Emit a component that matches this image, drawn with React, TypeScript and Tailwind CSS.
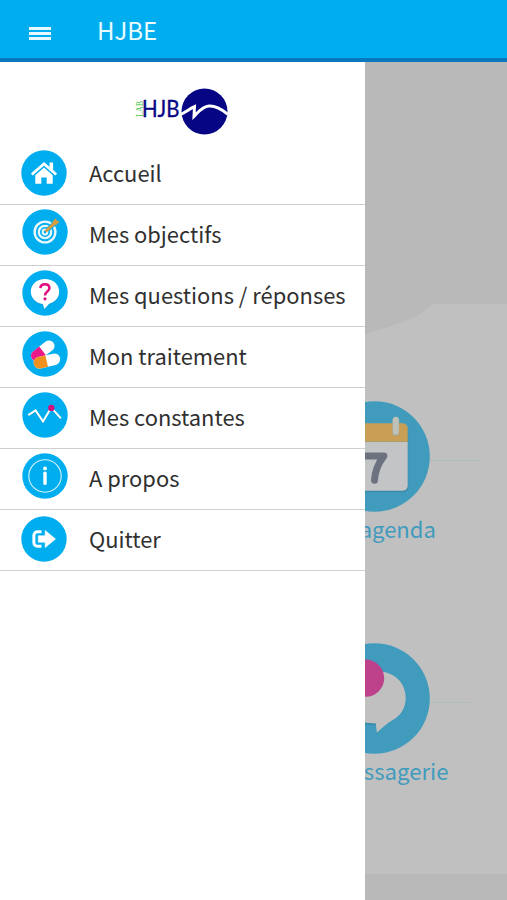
import type { ReactNode } from 'react';

const HomeIcon = () => (
  <svg viewBox="0 0 46 46" className="w-[46px] h-[46px]">
    <circle cx="23" cy="23" r="22.7" fill="#00aeef" />
    <path d="M28.5 12.5h3.6v8h-3.6z" fill="#fff" />
    <path d="M10.8 24.5 23 13.800l12.200 10.700" fill="none" stroke="#fff" strokeWidth="2.8" />
    <path d="M14.3 25.2 23 17.6l8.700 7.600v8.600h-6v-6.300h-5.400v6.300h-6z" fill="#fff" />
  </svg>
);

const TargetIcon = () => (
  <svg viewBox="0 0 46 46" className="w-[46px] h-[46px]">
    <circle cx="23" cy="23" r="22.7" fill="#00aeef" />
    <g fill="none" stroke="#e9f8fd">
      <circle cx="23" cy="23" r="10.4" strokeWidth="2.4" />
      <circle cx="23" cy="23" r="6.2" strokeWidth="2.3" />
      <circle cx="23" cy="23" r="2.4" strokeWidth="2" />
    </g>
    <path d="m26 20.400 6-5.600" stroke="#00aeef" strokeWidth="4.500" />
    <path d="m23.600 22.400 8-7.400" stroke="#d99b3c" strokeWidth="2.800" />
    <path d="m30 16.500.6-4 3.400-3.400.7 2.700 3 .6-3.500 3.500z" fill="#d99b3c" />
  </svg>
);

const QuestionIcon = () => (
  <svg viewBox="0 0 46 46" className="w-[46px] h-[46px]">
    <circle cx="23" cy="23" r="22.7" fill="#00aeef" />
    <path
      d="M23 9c-8 0-14.200 5.400-14.200 12.600 0 6.700 5.300 11.800 12 12.500l1.600 5 4.800-5.400c5.800-1.300 10-6 10-12.100C37.200 14.400 31 9 23 9z"
      fill="#0787bf"
      opacity=".45"
      transform="translate(0 1)"
    />
    <path
      d="M23 9c-8 0-14.200 5.400-14.200 12.600 0 6.700 5.300 11.800 12 12.500l1.600 5 4.800-5.400c5.800-1.300 10-6 10-12.100C37.200 14.400 31 9 23 9z"
      fill="#fff"
    />
    <path
      d="M18.400 18.200c.2-2.600 2-3.900 4.500-3.900 2.700 0 4.500 1.500 4.500 3.900 0 3.400-4.400 3.300-4.400 7.300"
      fill="none"
      stroke="#e20b80"
      strokeWidth="2.500"
    />
    <circle cx="23" cy="28.800" r="1.600" fill="#e20b80" />
  </svg>
);

const PillsIcon = () => (
  <svg viewBox="0 0 46 46" className="w-[46px] h-[46px]">
    <circle cx="23" cy="23" r="22.7" fill="#00aeef" />
    <g transform="rotate(-38 20.500 19.500)">
      <rect x="7" y="14.400" width="27" height="11" rx="5.500" fill="#fff" />
      <path d="M20.300 14.400v11h-7.800a5.500 5.500 0 0 1 0-11z" fill="#e9198a" />
    </g>
    <g transform="rotate(-13 25 30.500)">
      <rect x="11.500" y="24.200" width="27" height="11.600" rx="5.800" fill="#fff" />
      <path d="M24.800 24.200v11.600h-7.500a5.800 5.800 0 0 1 0-11.600z" fill="#f0911f" />
    </g>
  </svg>
);

const ConstantsIcon = () => (
  <svg viewBox="0 0 46 46" className="w-[46px] h-[46px]">
    <circle cx="23" cy="23" r="22.7" fill="#00aeef" />
    <path d="m6.300 24.200 7.200-4.800 7.500 11 8.200-13.700 9.700 10.500" fill="none" stroke="#0787bf" strokeWidth="2" opacity=".4" />
    <path d="m6.300 23.200 7.200-4.800 7.500 11 8.200-13.700 9.700 10.700" fill="none" stroke="#fff" strokeWidth="2" />
    <circle cx="29.300" cy="15.900" r="3.200" fill="#d3127f" />
  </svg>
);

const InfoIcon = () => (
  <svg viewBox="0 0 46 46" className="w-[46px] h-[46px]">
    <circle cx="23" cy="23" r="22.7" fill="#00aeef" />
    <circle cx="23" cy="23" r="16.200" fill="none" stroke="#d4f1fc" strokeWidth="1.100" />
    <circle cx="23" cy="15.400" r="1.900" fill="#fff" />
    <path d="M23 20.200v10.200" stroke="#fff" strokeWidth="3.400" strokeLinecap="round" />
  </svg>
);

const ExitIcon = () => (
  <svg viewBox="0 0 46 46" className="w-[46px] h-[46px]">
    <circle cx="23" cy="23" r="22.7" fill="#00aeef" />
    <path d="M20.500 15.700h-4a3.600 3.600 0 0 0-3.600 3.600v7.400a3.600 3.600 0 0 0 3.600 3.600h4" fill="none" stroke="#fff" strokeWidth="3" />
    <path d="M17.300 19.800h6.900v-5.400L34.500 23 24.200 31.600v-5.400h-6.900z" fill="#fff" stroke="#fff" strokeWidth=".6" strokeLinejoin="round" />
  </svg>
);

const Logo = () => (
  <svg viewBox="0 0 94 50" className="w-[94px] h-[50px]">
    <text
      transform="translate(8.500 31) rotate(-90)"
      textLength="16"
      lengthAdjust="spacingAndGlyphs"
      className="font-['Liberation_Serif',serif] text-[10px]"
      fill="#3fc43f"
    >
      LAB
    </text>
    <text
      x="8"
      y="31"
      textLength="37.500"
      lengthAdjust="spacingAndGlyphs"
      className="font-['Lato',sans-serif] text-[23px]"
      fill="#060685"
      stroke="#060685"
      strokeWidth=".4"
    >
      HJB
    </text>
    <circle cx="70.500" cy="25.500" r="23" fill="#060685" />
    <path
      d="M46.500 28.500c5-2.300 9-5.600 14-7.800l-.5 9.600c4.500-4.300 8-9.800 15-10.300 7-.5 13 3.500 18.500 8"
      fill="none"
      stroke="#fff"
      strokeWidth="3"
      strokeMiterlimit="8"
    />
  </svg>
);

const CalendarTile = () => (
  <svg viewBox="0 0 112 112" className="w-[111px] h-[111px]">
    <circle cx="56" cy="56" r="55.800" fill="#419bbd" />
    <rect x="22" y="25" width="68" height="67" rx="5" fill="#388aa9" />
    <path d="M22 41h67.500v44.500a5 5 0 0 1-5 5H27a5 5 0 0 1-5-5z" fill="#c3c4c6" />
    <path d="M22 41V27.500a5 5 0 0 1 5-5h57.500a5 5 0 0 1 5 5V41z" fill="#c99f55" />
    <path d="M32 20v12M77.500 20v12" stroke="#aaa590" strokeWidth="7" strokeLinecap="round" />
    <path d="M32 19v12M77.500 19v12" stroke="#bfc2b8" strokeWidth="6" strokeLinecap="round" />
    <path d="M46 55.500h19.500c-5.500 7-9 14-9.500 24.500" fill="none" stroke="#6d7281" strokeWidth="7" strokeLinecap="round" strokeLinejoin="round" />
  </svg>
);

const MessageTile = () => (
  <svg viewBox="0 0 112 112" className="w-[111px] h-[111px]">
    <circle cx="56" cy="56" r="55.800" fill="#419bbd" />
    <path
      d="M58 28.500c17.500 0 29.500 11 29.500 27 0 10-5.200 18-13.500 22.500-6 3.500-10 7.500-15.500 12.500l-1.300-9C40 82 28 71 28 55.500s12-27 30-27z"
      fill="#c0c0c0"
    />
    <path d="M46.500 80.500 57.200 81.200l.3 2L46.500 82z" fill="#378aa8" />
    <circle cx="47" cy="35.500" r="18.800" fill="#bd428b" />
  </svg>
);

const menuItems: { label: string; icon: ReactNode; iconClass: string }[] = [
  { label: 'Accueil', icon: <HomeIcon />, iconClass: 'ml-[21px] mr-[22px] mt-[5.500px]' },
  { label: 'Mes objectifs', icon: <TargetIcon />, iconClass: 'ml-[22px] mr-[21px] mt-[4px]' },
  { label: 'Mes questions / réponses', icon: <QuestionIcon />, iconClass: 'ml-[22px] mr-[21px] mt-[4px]' },
  { label: 'Mon traitement', icon: <PillsIcon />, iconClass: 'ml-[22px] mr-[21px] mt-[4px]' },
  { label: 'Mes constantes', icon: <ConstantsIcon />, iconClass: 'ml-[22px] mr-[21px] mt-[4px]' },
  { label: 'A propos', icon: <InfoIcon />, iconClass: 'ml-[22px] mr-[21px] mt-[4px]' },
  { label: 'Quitter', icon: <ExitIcon />, iconClass: 'ml-[21px] mr-[22px] mt-[6px]' },
];

function Drawer() {
  return (
    <nav className="absolute left-0 top-0 bottom-0 w-[365px] bg-white">
      <div className="h-[82px] pt-6 pl-[134px]">
        <Logo />
      </div>
      {menuItems.map((item) => (
        <div key={item.label} className="flex h-[61px] border-b border-[#cfcfcf]">
          <div className={`shrink-0 ${item.iconClass}`}>{item.icon}</div>
          <span className="text-[21.9px] leading-[57px] text-[#303030] whitespace-nowrap">{item.label}</span>
        </div>
      ))}
    </nav>
  );
}

export default function App() {
  return (
    <div className="w-[507px] h-[900px] flex flex-col overflow-hidden font-['Noto_Sans_CJK_JP',sans-serif]">
      <header className="h-[62px] shrink-0 bg-[#00aeef] border-b-4 border-[#0878bd] flex items-center">
        <button className="ml-[29px] mt-2 flex flex-col gap-[2px]">
          <span className="w-[22px] h-[3px] bg-[#e6faff]" />
          <span className="w-[22px] h-[3px] bg-[#e6faff]" />
          <span className="w-[22px] h-[3px] bg-[#e6faff]" />
        </button>
        <h1 className="ml-[46px] mt-[2px] text-2xl leading-8 text-[#e9fbff]">HJBE</h1>
      </header>

      <main className="relative flex-1 bg-[#b9b9b9] pt-[242px]">
        <section className="relative h-[570px] bg-[#c0c0c0] pt-[97px] pl-[242px]">
          <svg viewBox="0 0 433 31" className="absolute left-0 top-0 w-[433px] h-[31px]">
            <path d="M0 0h433l-9 7-9 6-12 5-17 6-21 6-365 1z" fill="#b9b9b9" />
          </svg>

          <div className="w-[265px] flex flex-col items-center">
            <CalendarTile />
            <span className="h-8 pr-[3px] text-[22px] leading-8 text-[#419bbd]">Mon agenda</span>
          </div>

          <div className="mt-[99px] w-[265px] flex flex-col items-center">
            <MessageTile />
            <span className="h-8 pr-[5px] text-[22.2px] leading-8 text-[#419bbd]">Ma messagerie</span>
          </div>

          <div className="absolute left-[430px] top-[156px] w-[50px] h-px bg-[#b0bcc0]" />
          <div className="absolute left-[430px] top-[398px] w-10 h-px bg-[#b0bcc0]" />
        </section>
        <Drawer />
      </main>
    </div>
  );
}
